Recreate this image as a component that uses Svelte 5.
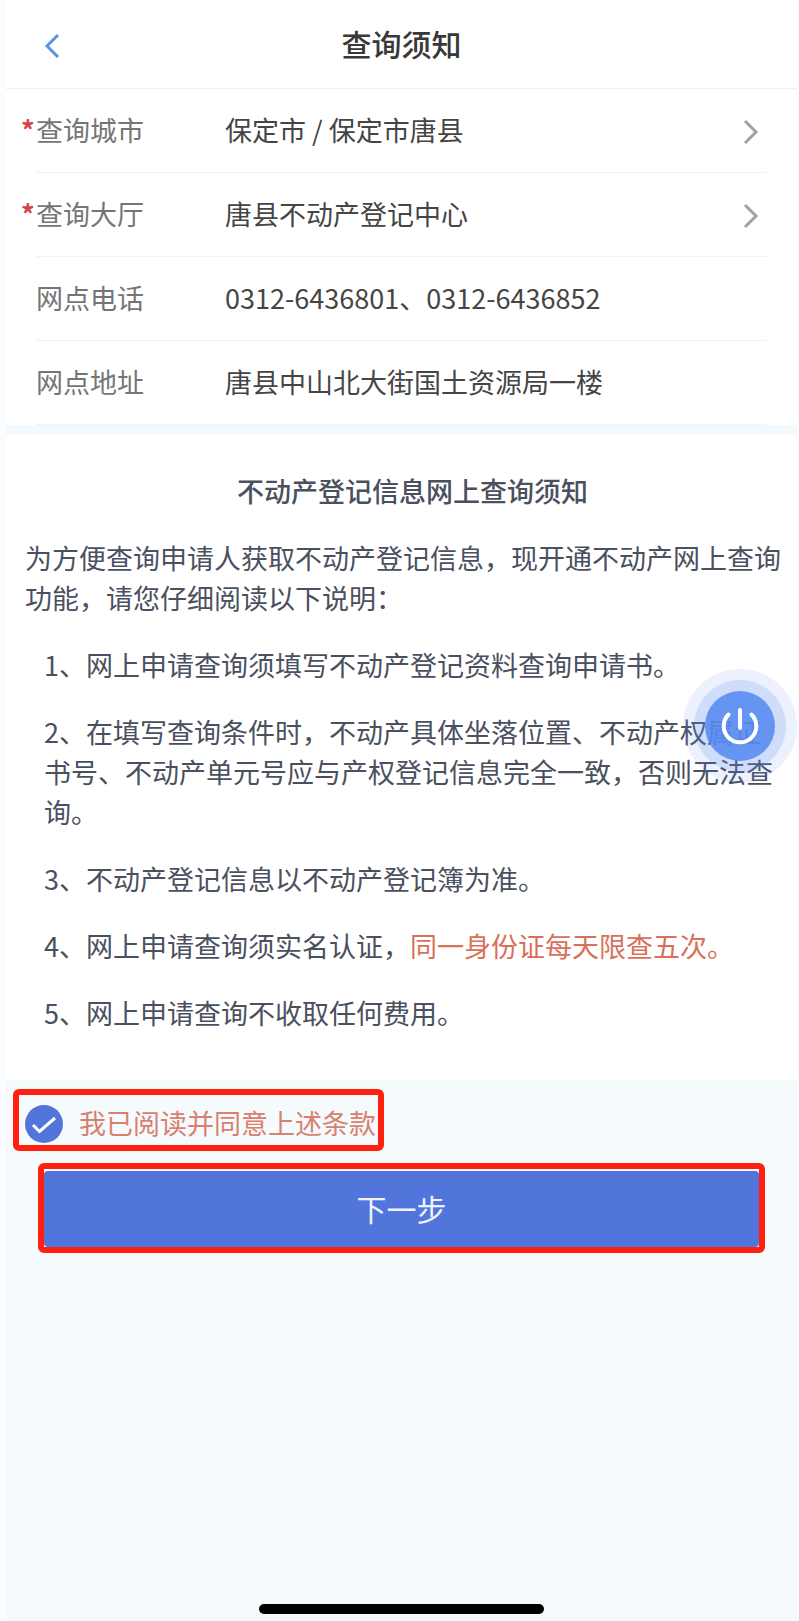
<script>
  const pickers = [
    { label: '查询城市', value: '保定市 / 保定市唐县' },
    { label: '查询大厅', value: '唐县不动产登记中心' }
  ];
  const details = [
    { label: '网点电话', value: '0312-6436801、0312-6436852' },
    { label: '网点地址', value: '唐县中山北大街国土资源局一楼' }
  ];
  const terms = [
    { text: '1、网上申请查询须填写不动产登记资料查询申请书。' },
    { text: '2、在填写查询条件时，不动产具体坐落位置、不动产权属证书号、不动产单元号应与产权登记信息完全一致，否则无法查询。' },
    { text: '3、不动产登记信息以不动产登记簿为准。' },
    { text: '4、网上申请查询须实名认证，', warn: '同一身份证每天限查五次。' },
    { text: '5、网上申请查询不收取任何费用。' }
  ];
  let agreed = $state(true);
</script>

<div class="page">
  <header>
    <button class="back" aria-label="返回">
      <svg width="16" height="26" viewBox="0 0 16 26"><path d="M14 2 3 13l11 11" /></svg>
    </button>
    <h1>查询须知</h1>
  </header>

  <section class="fields">
    {#each pickers as item}
      <button class="row picker">
        <span class="label"><span class="star">*</span>{item.label}</span>
        <span class="value">{item.value}</span>
        <svg class="chevron" width="16" height="26" viewBox="0 0 16 26"><path d="M2 2 13 13 2 24" /></svg>
      </button>
    {/each}
    {#each details as item}
      <div class="row">
        <span class="label">{item.label}</span>
        <span class="value">{item.value}</span>
      </div>
    {/each}
  </section>

  <section class="notice">
    <h2>不动产登记信息网上查询须知</h2>
    <p>为方便查询申请人获取不动产登记信息，现开通不动产网上查询功能，请您仔细阅读以下说明：</p>
    <ul>
      {#each terms as term}
        <li>{term.text}{#if term.warn}<span class="warn">{term.warn}</span>{/if}</li>
      {/each}
    </ul>
    <button class="power" aria-label="退出">
      <svg width="114" height="114" viewBox="0 0 114 114">
        <circle cx="57" cy="57" r="57" fill="#5f8df0" fill-opacity="0.12" />
        <circle cx="57" cy="57" r="46" fill="#5f8df0" fill-opacity="0.2" />
        <circle cx="57" cy="57" r="35" fill="#568af0" fill-opacity="0.88" />
        <path d="M45.500 45.500a16.300 16.300 0 1 0 23 0M57 41v18" fill="none" stroke="#fff" stroke-width="4" stroke-linecap="round" />
      </svg>
    </button>
  </section>

  <footer>
    <label class="agree">
      <span class="tick">
        <input type="checkbox" bind:checked={agreed} />
        <svg width="38" height="38" viewBox="0 0 38 38"><path d="M8 20 14.500 26.500 30 13" /></svg>
      </span>
      我已阅读并同意上述条款
    </label>
    <div class="frame">
      <button class="next" disabled={!agreed}>下一步</button>
    </div>
    <div class="home"></div>
  </footer>
</div>

<style>
  :global(body) {
    background: #fafcff;
  }

  .page {
    display: flex;
    flex-direction: column;
    min-height: 100vh;
    box-sizing: border-box;
    padding: 0 2px 0 6px;
    font-family: 'Noto Sans CJK SC', sans-serif;
    font-size: 27px;
    line-height: 40px;
    color: #4a505e;
  }

  button {
    border: 0;
    padding: 0;
    background: none;
    font: inherit;
    color: inherit;
    text-align: left;
    cursor: pointer;
  }

  svg {
    display: block;
  }

  h1,
  h2,
  p,
  ul {
    margin: 0;
    padding: 0;
  }

  header {
    display: grid;
    grid-template-columns: 80px 1fr 80px;
    align-items: center;
    box-sizing: border-box;
    height: 89px;
    padding-bottom: 2px;
    background: #fff;
    border-bottom: 1px solid #f0f1f3;
  }

  .back {
    padding: 6px 0 0 38px;
  }

  .back path {
    fill: none;
    stroke: #5a92e2;
    stroke-width: 3;
  }

  h1 {
    text-align: center;
    font-size: 30px;
    font-weight: 500;
    color: #383838;
  }

  .fields {
    background: #fff;
    padding: 0 30px;
    border-bottom: 10px solid #f4f9fd;
  }

  .row {
    display: flex;
    align-items: center;
    box-sizing: border-box;
    width: 100%;
    height: 84px;
    padding-bottom: 2px;
    border-bottom: 1px solid #f2f3f5;
  }

  .label {
    position: relative;
    flex: none;
    width: 189px;
    color: #757575;
  }

  .star {
    position: absolute;
    left: -15px;
    color: #d5434b;
    font-weight: 700;
  }

  .value {
    flex: 1;
    color: #454545;
  }

  .chevron {
    margin: 4px 8px 0 0;
  }

  .chevron path {
    fill: none;
    stroke: #a2a2a2;
    stroke-width: 3;
  }

  .notice {
    position: relative;
    display: flex;
    flex-direction: column;
    gap: 27px;
    padding: 36px 16px 47px 19px;
    background: #fff;
  }

  h2 {
    padding-left: 19px;
    text-align: center;
    font-size: 27px;
    font-weight: 500;
  }

  ul {
    display: flex;
    flex-direction: column;
    gap: 27px;
    padding: 0 0 0 19px;
    list-style: none;
  }

  .warn {
    color: #d9705a;
  }

  .power {
    position: absolute;
    top: 234px;
    right: 0;
    border-radius: 50%;
  }

  footer {
    flex: 1;
    display: flex;
    flex-direction: column;
    align-items: flex-start;
    padding: 9px 32px 7px 7px;
    background: #f5fafd;
  }

  .agree {
    display: flex;
    align-items: center;
    gap: 16px;
    box-sizing: border-box;
    height: 62px;
    padding: 6px 2px 0 6px;
    border: 6px solid #ff2012;
    border-radius: 6px;
    color: #d9806e;
  }

  .tick {
    display: grid;
    margin-top: 2px;
  }

  .tick input,
  .tick svg {
    grid-area: 1 / 1;
  }

  .tick input {
    appearance: none;
    width: 38px;
    height: 38px;
    margin: 0;
    border-radius: 50%;
    background: #c9d2e6;
  }

  .tick input:checked {
    background: #5175da;
  }

  .tick svg {
    pointer-events: none;
  }

  .tick path {
    fill: none;
    stroke: #fff;
    stroke-width: 3;
  }

  .frame {
    align-self: stretch;
    margin: 12px 0 0 25px;
    padding-top: 2px;
    border: 6px solid #ff2012;
    border-radius: 6px;
  }

  .next {
    display: block;
    box-sizing: border-box;
    width: 100%;
    height: 76px;
    padding-bottom: 2px;
    border-radius: 4px;
    background: #5175da;
    color: #eef3ff;
    font-size: 30px;
    text-align: center;
  }

  .home {
    align-self: center;
    width: 38%;
    height: 10px;
    margin: auto 0 0 25px;
    border-radius: 5px;
    background: #000;
  }
</style>
